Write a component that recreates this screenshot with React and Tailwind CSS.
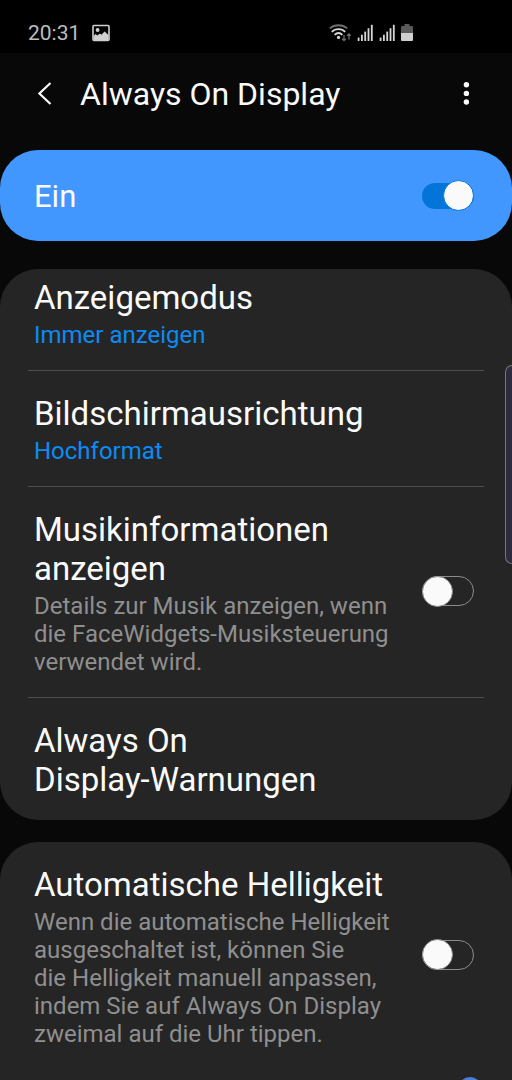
import { useState } from 'react'

function PictureIcon() {
  return (
    <svg className="w-[18px] h-[18px]" viewBox="0 0 18 18" fill="none">
      <rect x="1" y="1.5" width="16" height="15" rx="1" stroke="#cfcfcf" strokeWidth="1.6" />
      <circle cx="5.6" cy="6" r="1.9" fill="#cfcfcf" />
      <path d="M1.5 12 3.6 10 5.4 11.6 7.8 9.6 9.4 10.8 12.6 7.6 16.5 11v5.5h-15z" fill="#cfcfcf" />
    </svg>
  )
}

function WifiIcon() {
  return (
    <svg className="w-[22px] h-[18px]" viewBox="0 0 22 18" fill="none">
      <path d="M0.8 4.4C5.5 0.2 13.5 0.2 18.2 4.4" stroke="#6e6e6e" strokeWidth="1.8" />
      <path d="M2.8 7.8C6.3 4.2 12.7 4.2 16.2 7.8" stroke="#d6d6d6" strokeWidth="1.9" />
      <path d="M5.6 10.8C8 8.4 11 8.4 13.4 10.8" stroke="#d6d6d6" strokeWidth="1.9" />
      <circle cx="9.5" cy="13.4" r="1.6" fill="#d6d6d6" />
      <path d="M15 11v5.5M13.2 14.8l1.8 1.8 1.8-1.8M20 15.5V10M18.2 11.8 20 10l1.8 1.8" stroke="#6e6e6e" strokeWidth="1.3" />
    </svg>
  )
}

function SignalIcon() {
  return (
    <svg className="w-4 h-[18px]" viewBox="0 0 16 18" fill="#d6d6d6">
      <rect x="0.7" y="13.6" width="1.8" height="3.4" />
      <rect x="4" y="10.8" width="1.8" height="6.2" />
      <rect x="7.3" y="7.6" width="1.8" height="9.4" />
      <rect x="10.6" y="4.2" width="1.8" height="12.8" />
      <rect x="13.9" y="0.8" width="1.8" height="16.2" />
    </svg>
  )
}

function BatteryIcon() {
  return (
    <svg className="w-3 h-[18px]" viewBox="0 0 12 18">
      <path d="M3.5 0h5v2H11a1 1 0 0 1 1 1v6H0V3a1 1 0 0 1 1-1h2.5z" fill="#5a5a5a" />
      <path d="M0 9h12v7a1 1 0 0 1-1 1H1a1 1 0 0 1-1-1z" fill="#cfcfcf" />
    </svg>
  )
}

function Switch({ id, checked, onChange }) {
  return (
    <input
      id={id}
      type="checkbox"
      role="switch"
      checked={checked}
      onChange={(e) => onChange(e.target.checked)}
      className="appearance-none shrink-0 grid items-center w-[52px] h-8 cursor-pointer before:content-[''] before:[grid-area:1/1] before:h-[30px] before:rounded-full before:border before:border-[#8c8c8c] checked:before:h-[26px] checked:before:border-0 checked:before:bg-[#0475d8] after:content-[''] after:[grid-area:1/1] after:w-[31px] after:h-[31px] after:rounded-full after:bg-[#fafafa] after:border after:border-[#8c8c8c] checked:after:justify-self-end checked:after:border-[#0475d8]"
    />
  )
}

function LinkRow({ title, value }) {
  return (
    <a href="#" className="block px-[34px] pt-[23px] pb-[21px]">
      <span className="block text-[33px] leading-[39px] text-[#fafafa]">{title}</span>
      {value && <span className="block mt-1 text-2xl leading-7 text-[#0a8cf5]">{value}</span>}
    </a>
  )
}

function SwitchRow({ id, title, text }) {
  const [on, setOn] = useState(false)

  return (
    <div className="flex items-start gap-5 pl-[34px] pr-[38px] pt-[23px] pb-[21px]">
      <label htmlFor={id} className="flex-1">
        <span className="block text-[33px] leading-[39px] text-[#fafafa]">{title}</span>
        <span className="block mt-1 text-2xl leading-7 text-[#8f8f8f]">{text}</span>
      </label>
      <div className="flex self-stretch items-center pb-1">
        <Switch id={id} checked={on} onChange={setOn} />
      </div>
    </div>
  )
}

function Divider() {
  return <hr className="mx-7 border-t border-[#4d4d4d]" />
}

export default function App() {
  const [enabled, setEnabled] = useState(true)

  return (
    <div className="relative flex flex-col h-screen overflow-hidden bg-[#080808] text-[#fafafa] font-['Roboto',sans-serif]">
      <div className="flex items-center justify-between shrink-0 h-[53px] pt-3 pl-7 pr-[99px] bg-black">
        <div className="flex items-center gap-3">
          <span className="text-[21px] leading-6 text-[#bdbdbd]">20:31</span>
          <PictureIcon />
        </div>
        <div className="flex items-center gap-[6px]">
          <WifiIcon />
          <SignalIcon />
          <SignalIcon />
          <BatteryIcon />
        </div>
      </div>

      <header className="flex items-center shrink-0 h-[82px] pl-9 pr-8">
        <button type="button" aria-label="Zurück" className="mr-7">
          <svg className="w-4 h-6" viewBox="0 0 16 24" fill="none">
            <path d="M14.5 1 3.4 11.5l11.1 10.5" stroke="#fafafa" strokeWidth="2.2" />
          </svg>
        </button>
        <h1 className="flex-1 text-[32px] leading-[39px]">Always On Display</h1>
        <button type="button" aria-label="Weitere Optionen">
          <svg className="w-7 h-6" viewBox="0 0 28 24" fill="#fafafa">
            <circle cx="14.4" cy="2.8" r="2.7" />
            <circle cx="14.4" cy="11.4" r="2.7" />
            <circle cx="14.4" cy="20" r="2.7" />
          </svg>
        </button>
      </header>

      <div className="flex items-center justify-between shrink-0 h-[91px] mt-[15px] pl-[34px] pr-[38px] rounded-[38px] bg-[#4297ff]">
        <label htmlFor="aod" className="pt-px text-[31px] leading-[39px]">Ein</label>
        <Switch id="aod" checked={enabled} onChange={setEnabled} />
      </div>

      <main className="flex-1 flex flex-col gap-[22px] mt-7 overflow-hidden rounded-t-[38px]">
        <section className="shrink-0 -mt-[14px] rounded-b-[38px] bg-[#252525]">
          <LinkRow title="Anzeigemodus" value="Immer anzeigen" />
          <Divider />
          <LinkRow title="Bildschirmausrichtung" value="Hochformat" />
          <Divider />
          <SwitchRow
            id="music"
            title="Musikinformationen anzeigen"
            text="Details zur Musik anzeigen, wenn die FaceWidgets-Musiksteuerung verwendet wird."
          />
          <Divider />
          <LinkRow title={<>Always On <span className="whitespace-nowrap">Display-Warnungen</span></>} />
        </section>

        <section className="shrink-0 rounded-[38px] bg-[#252525]">
          <SwitchRow
            id="brightness"
            title="Automatische Helligkeit"
            text={'Wenn die automatische Helligkeit ausgeschaltet ist, können Sie die\u00a0Helligkeit manuell anpassen, indem Sie auf Always On Display zweimal auf die Uhr tippen.'}
          />
          <div className="flex pl-[34px] pr-[30px] pt-2 pb-6">
            <input
              type="range"
              aria-label="Helligkeit"
              defaultValue="100"
              className="appearance-none flex-1 h-6 bg-transparent [&::-webkit-slider-runnable-track]:h-6 [&::-webkit-slider-thumb]:appearance-none [&::-webkit-slider-thumb]:w-6 [&::-webkit-slider-thumb]:h-6 [&::-webkit-slider-thumb]:rounded-full [&::-webkit-slider-thumb]:bg-[#4a7fe0]"
            />
          </div>
        </section>
      </main>

      {/* edge panel handle */}
      <div className="absolute right-0 top-[365px] w-[7px] h-[199px] rounded-l-lg border border-r-0 border-[#777] bg-[#2f2b3f]" />
    </div>
  )
}
